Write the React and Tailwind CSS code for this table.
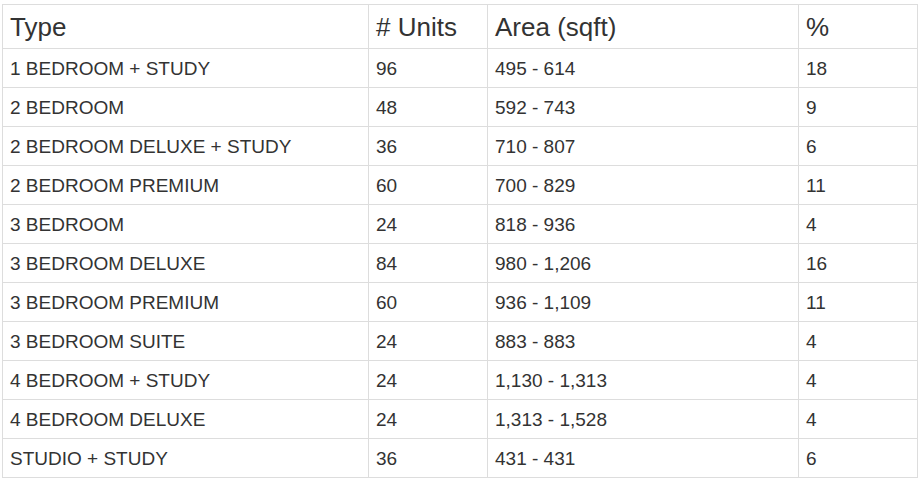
import React from "react";

const rows = [
  ["1 BEDROOM + STUDY", "96", "495 - 614", "18"],
  ["2 BEDROOM", "48", "592 - 743", "9"],
  ["2 BEDROOM DELUXE + STUDY", "36", "710 - 807", "6"],
  ["2 BEDROOM PREMIUM", "60", "700 - 829", "11"],
  ["3 BEDROOM", "24", "818 - 936", "4"],
  ["3 BEDROOM DELUXE", "84", "980 - 1,206", "16"],
  ["3 BEDROOM PREMIUM", "60", "936 - 1,109", "11"],
  ["3 BEDROOM SUITE", "24", "883 - 883", "4"],
  ["4 BEDROOM + STUDY", "24", "1,130 - 1,313", "4"],
  ["4 BEDROOM DELUXE", "24", "1,313 - 1,528", "4"],
  ["STUDIO + STUDY", "36", "431 - 431", "6"],
];

const App = () => {
  return (
    <div className="bg-white w-[922px] h-[485px] pt-[4px] pl-[2px] font-[Liberation_Sans] text-[#333]">
      {/* Unit mix table */}
      <table className="w-[915px] table-fixed border-collapse font-[Liberation_Sans]">
        <colgroup>
          <col className="w-[366px]" />
          <col className="w-[119px]" />
          <col className="w-[311px]" />
          <col className="w-[119px]" />
        </colgroup>
        <thead>
          <tr className="h-[44px]">
            <th className="border border-[#ddd] px-[7px] text-left font-normal text-[26px] leading-none">Type</th>
            <th className="border border-[#ddd] px-[7px] text-left font-normal text-[26px] leading-none"># Units</th>
            <th className="border border-[#ddd] px-[7px] text-left font-normal text-[26px] leading-none">Area (sqft)</th>
            <th className="border border-[#ddd] px-[7px] text-left font-normal text-[26px] leading-none">%</th>
          </tr>
        </thead>
        <tbody>
          {rows.map((r) => (
            <tr key={r[0]} className="h-[39px]">
              {r.map((c, i) => (
                <td key={i} className="border border-[#ddd] px-[7px] text-[19px] leading-none">
                  {c}
                </td>
              ))}
            </tr>
          ))}
        </tbody>
      </table>
    </div>
  );
};

export default App;
